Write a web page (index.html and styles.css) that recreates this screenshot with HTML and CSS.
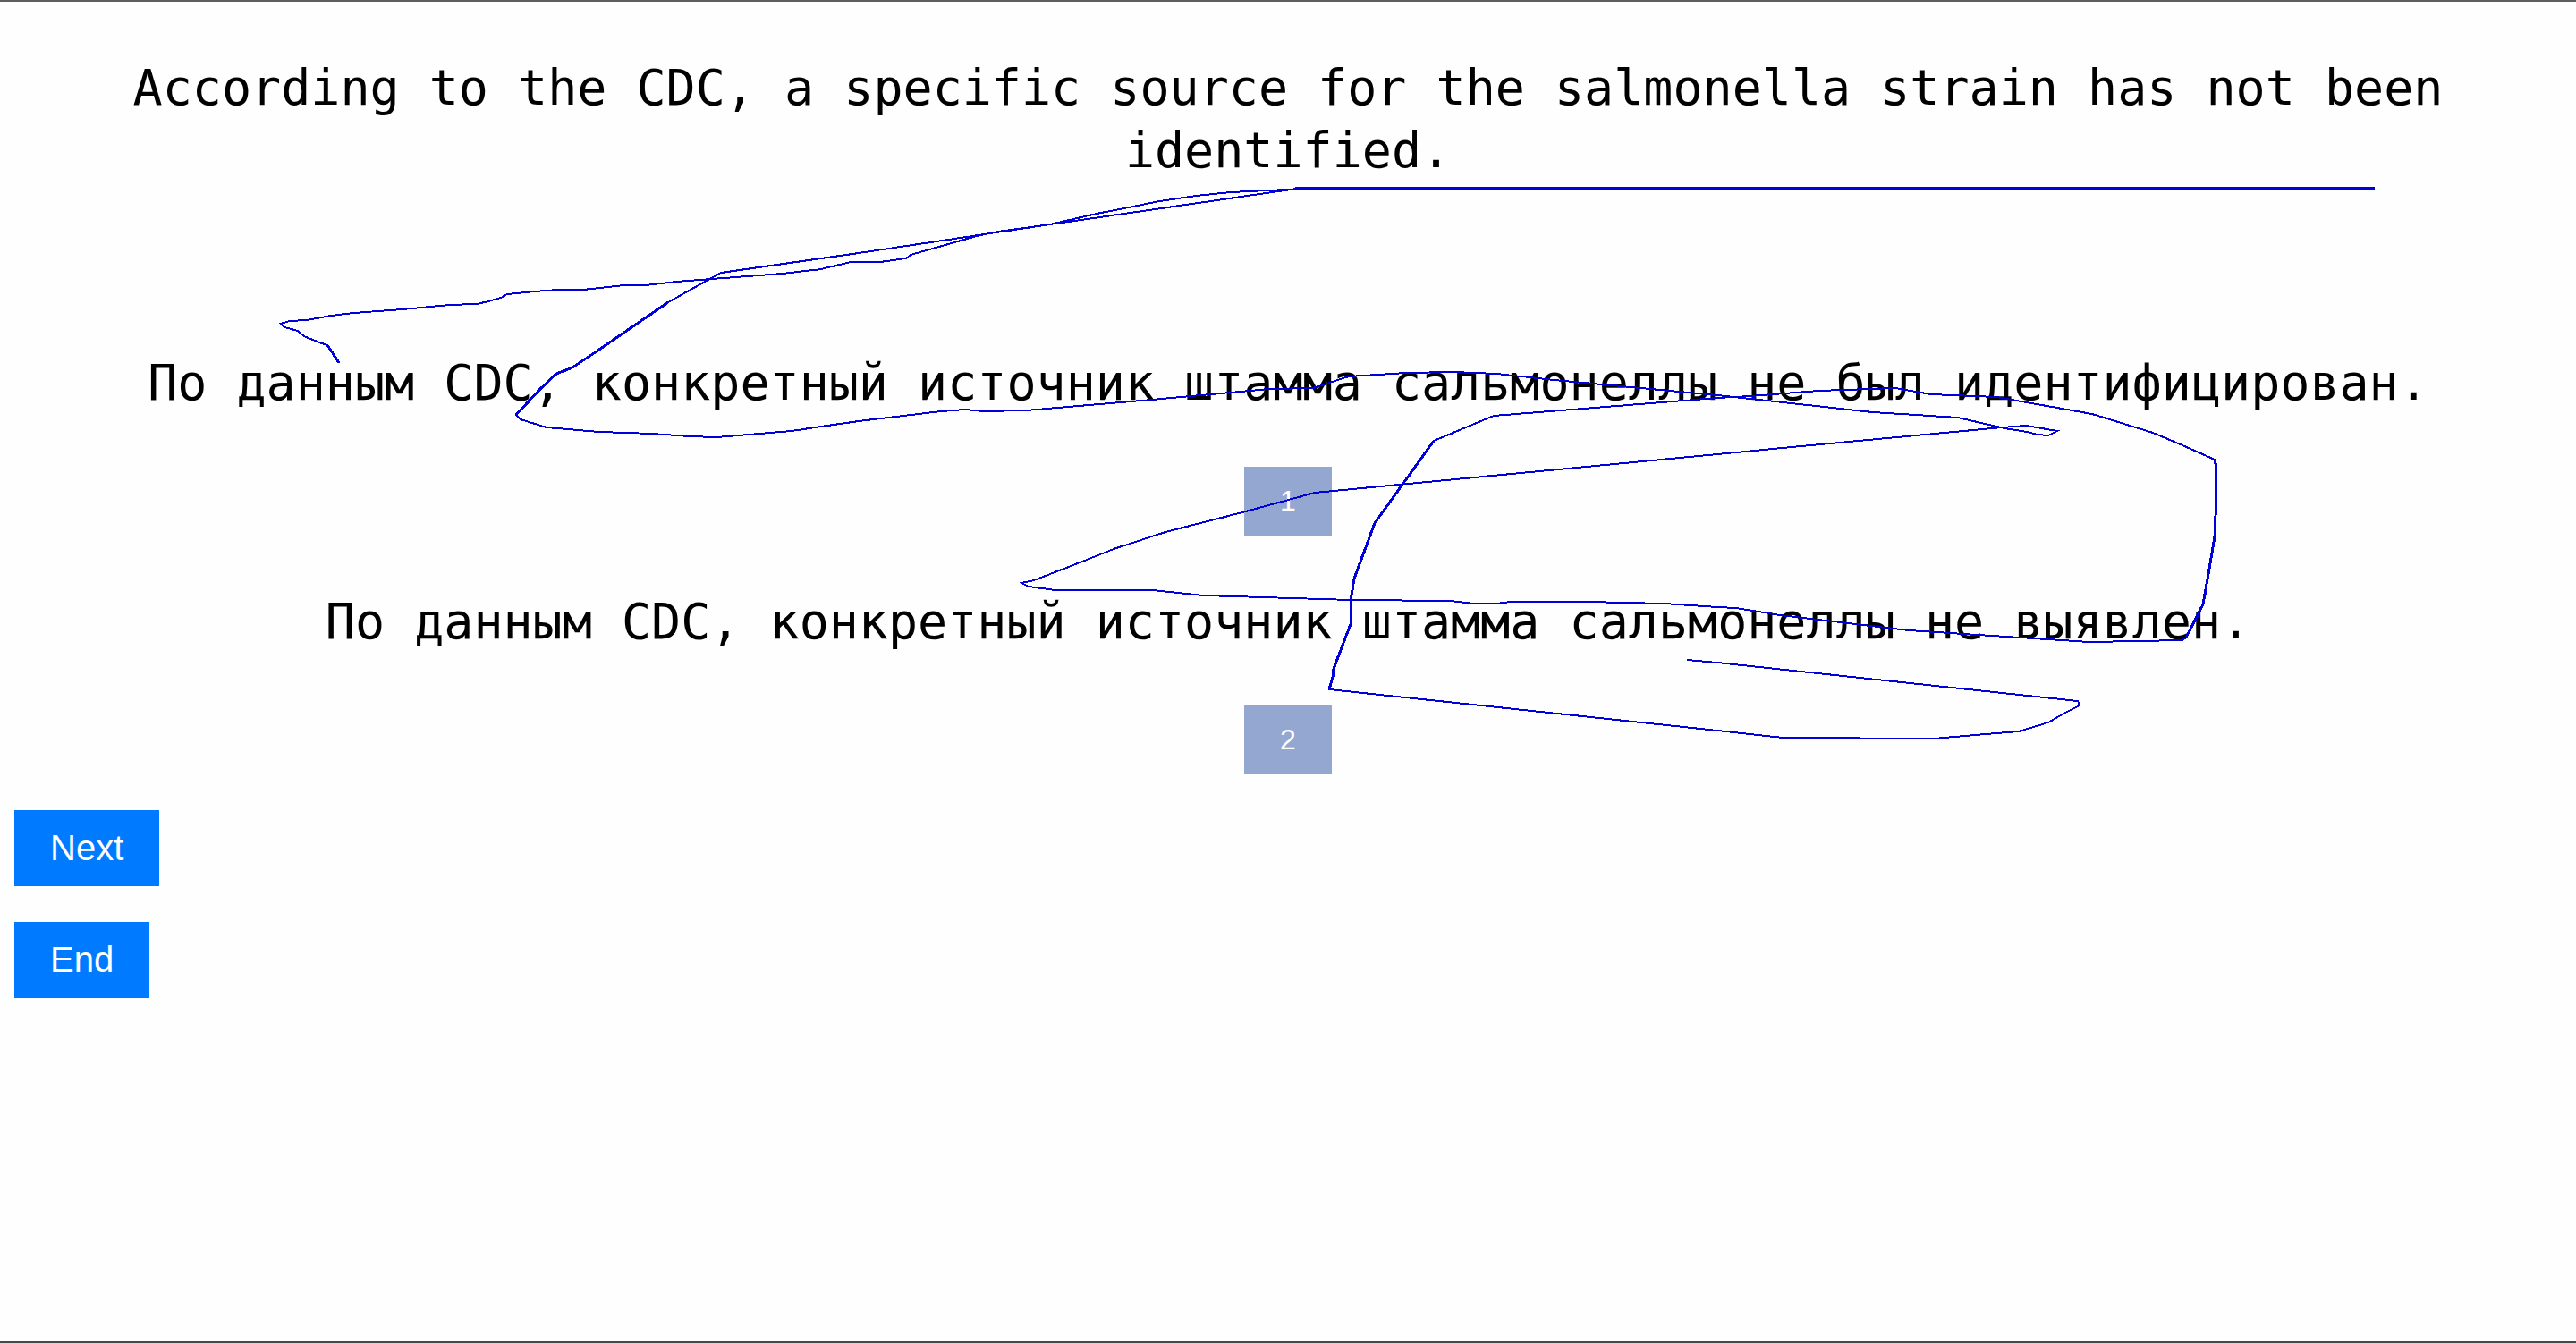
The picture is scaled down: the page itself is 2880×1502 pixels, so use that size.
FILE: index.html
```html
<!DOCTYPE html>
<html lang="en">
<head>
  <meta charset="utf-8">
  <title>Translation choice</title>
  <link rel="stylesheet" href="styles.css">
</head>
<body>
  <main class="task">
    <p class="sentence source">According to the CDC, a specific source for the salmonella strain has not been identified.</p>
    <section class="options" lang="ru">
      <div class="option">
        <p class="sentence" id="option-1">По данным CDC, конкретный источник штамма сальмонеллы не был идентифицирован.</p>
        <button class="button pick" type="button" aria-describedby="option-1">1</button>
      </div>
      <div class="option">
        <p class="sentence" id="option-2">По данным CDC, конкретный источник штамма сальмонеллы не выявлен.</p>
        <button class="button pick" type="button" aria-describedby="option-2">2</button>
      </div>
    </section>
    <nav class="actions">
      <button class="button action" type="button">Next</button>
      <button class="button action" type="button">End</button>
    </nav>
  </main>
  <!-- Pointer trace drawn over the task -->
  <svg class="trace" viewBox="0 0 2880 1502" aria-hidden="true">
    <polyline points="379,406 372,395 366,386 357,383 340,376 333,370 318,366 314,362 324,359 343,358 370,353 395,350 450,346 502,341 533,340 546,337 560,333 567,329 597,326 624,324 652,324 698,319 722,319 756,315 796,312 875,306 918,301 951,293 960,293 984,293 1013,289 1018,285 1092,264 1116,259 1174,251 1226,239 1297,225 1337,219 1376,215 1438,212 1514,212"/>
    <polyline points="1886,738 1920,741 2323,784 2325,789 2309,797 2290,808 2257,818 2220,821 2162,826 1993,825 1920,817 1486,771 1490,757 1491,748 1510,698 1510,673 1514,647 1537,585 1603,493 1670,465 1920,445 1957,443 2033,437 2119,434 2159,441 2232,444 2339,463 2407,484 2440,498 2476,514 2478,523 2477,577 2476,600 2471,630 2463,676 2444,713 2440,716 2336,718 2211,710 2134,705 1990,688 1941,680 1920,679 1860,675 1774,673 1689,673 1673,675 1649,675 1621,672 1511,671 1346,666 1288,660 1180,660 1150,656 1142,652 1156,649 1205,630 1245,614 1303,595 1389,573 1470,551 1920,508 2003,500 2238,478 2265,476 2300,482 2290,487 2278,486 2266,483 2241,479 2189,467 2094,461 1957,446 1920,442 1738,425 1673,418 1624,416 1572,417 1508,421 1468,434 1419,435 1288,447 1147,459 1100,460 1079,458 1052,460 960,471 918,477 885,482 801,489 771,488 729,485 670,483 611,478 582,469 577,464 603,436 622,418 640,411 667,393 747,338 806,305 960,283 1174,251 1450,211"/>
    <path class="heavy" d="M1448 210.5H2655M379 406L372 395L366 386M577 464L603 436L622 418L640 411L667 393L747 338M1486 771L1490 757L1491 748L1510 698V673L1514 647L1537 585L1603 493M2476 514L2478 523L2477 577L2476 600L2471 630L2463 676L2444 713"/>
  </svg>
</body>
</html>
```
FILE: styles.css
```css
* {
  box-sizing: border-box;
}

body {
  position: relative;
  min-height: 100vh;
  margin: 0;
  border-top: 2px solid #605e5e;
  border-bottom: 2px solid #484848;
  background: #fefefe;
  color: #000;
}

.task {
  display: flex;
  flex-direction: column;
  padding: 61px 16px 40px;
}

.sentence {
  margin: 0;
  font: 55px/70px Consolas, "DejaVu Sans Mono", monospace;
  text-align: center;
}

.options {
  display: flex;
  flex-direction: column;
  gap: 61px;
  margin-top: 190px;
}

.option {
  display: flex;
  flex-direction: column;
  align-items: center;
  gap: 59px;
}

.button {
  padding: 20px 40px;
  border: 0;
  color: #fff;
  font-family: Arial, "Liberation Sans", sans-serif;
  cursor: pointer;
}

.pick {
  background: #94a7d0;
  font-size: 32px;
  line-height: 37px;
}

.actions {
  display: flex;
  flex-direction: column;
  align-items: flex-start;
  gap: 40px;
  margin-top: 40px;
}

.action {
  background: #007bff;
  font-size: 40px;
  line-height: 45px;
}

.trace {
  position: absolute;
  top: -2px;
  left: 0;
  width: 100%;
  fill: none;
  stroke: #0000d8;
  stroke-width: 2;
  pointer-events: none;
  shape-rendering: crispEdges;
}

.heavy {
  stroke-width: 3;
}
```
